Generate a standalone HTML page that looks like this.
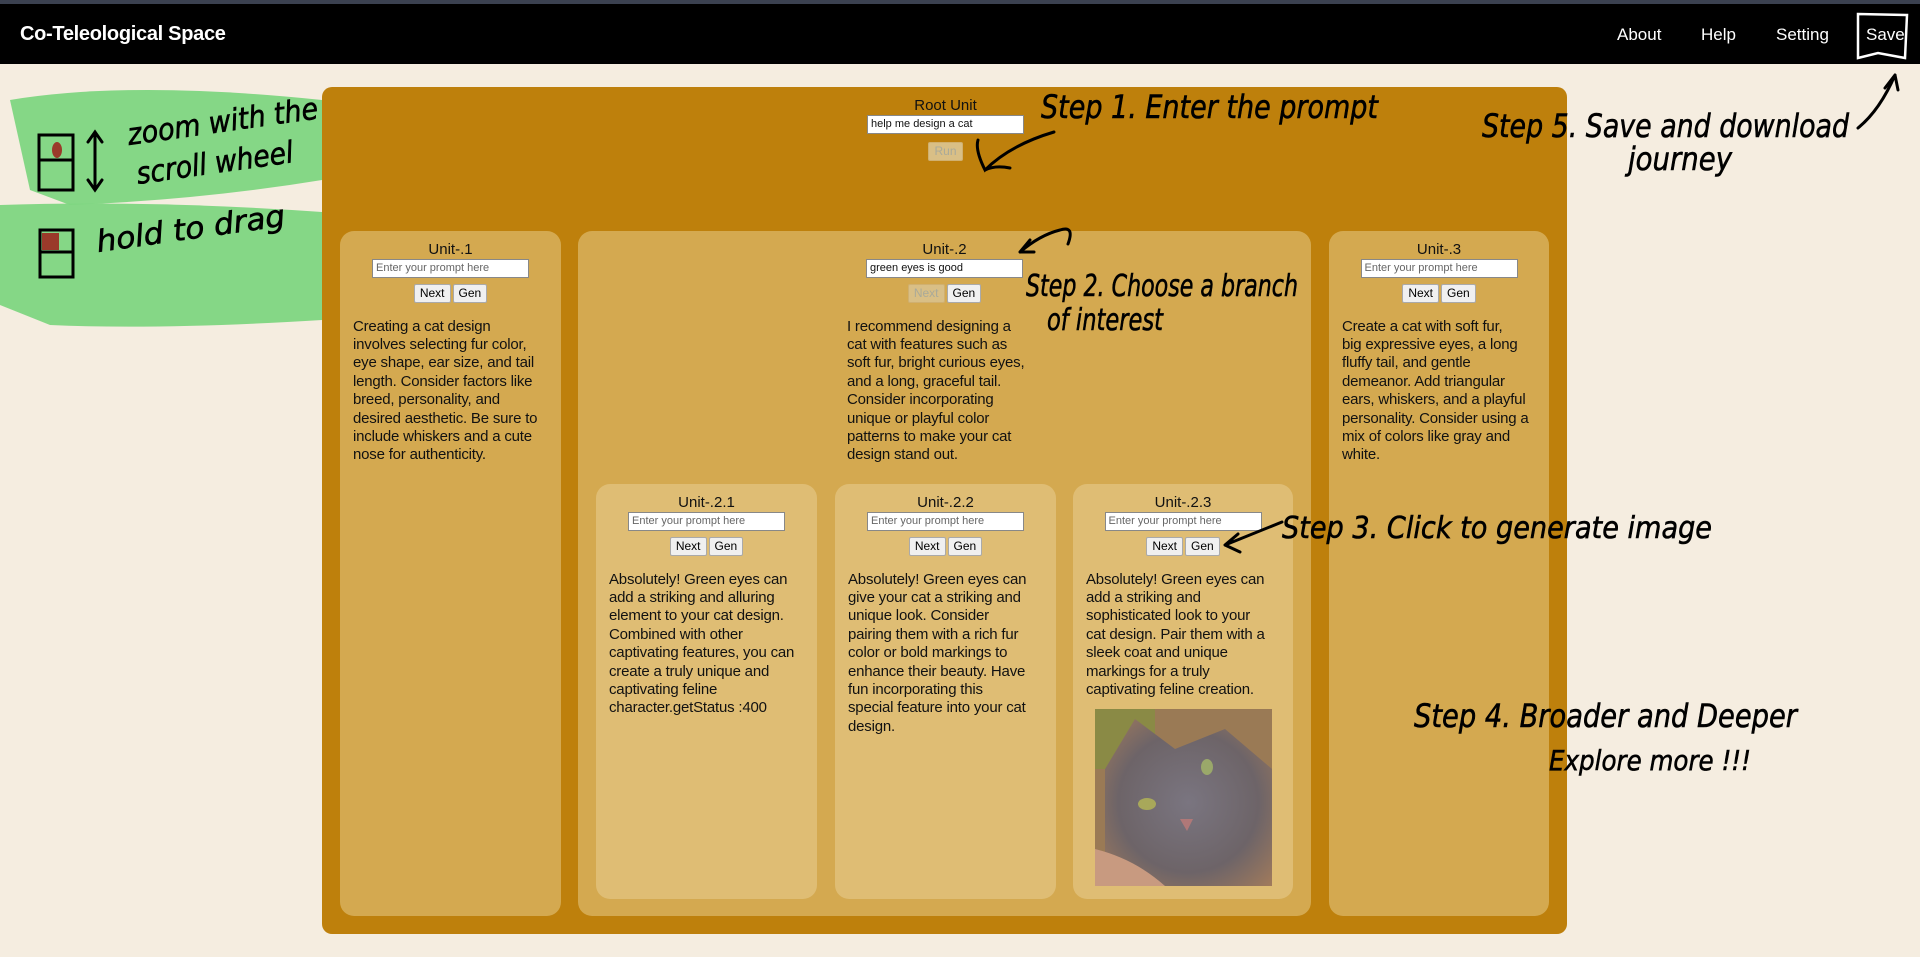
<!DOCTYPE html>
<html><head><meta charset="utf-8"><style>
*{box-sizing:border-box}
body{margin:0;width:1920px;height:957px;background:#f5ede0;font-family:"Liberation Sans",sans-serif;position:relative;overflow:hidden;color:#111}
.top{position:absolute;left:0;top:0;width:1920px;height:4px;background:#3b4150}
.nav{position:absolute;left:0;top:4px;width:1920px;height:60px;background:#000;color:#fff}
.title{position:absolute;left:20px;top:19px;font-size:20px;font-weight:bold;letter-spacing:-0.3px}
.nl{position:absolute;top:21px;font-size:17px}
.outer{position:absolute;left:322px;top:87px;width:1245px;height:847px;background:#be800c;border-radius:10px}
.card{position:absolute;border-radius:14px;text-align:center}
.c1{background:#d4a950}
.c2{background:#dfbd74}
.lbl{font-size:15px;height:17px;line-height:17px;margin-top:10px}
input{width:157px;height:19px;font-size:11px;padding:1px 3px;border:1px solid #888;font-family:"Liberation Sans",sans-serif;background:#fff;color:#111}
input::placeholder{color:#666}
.btns{margin-top:6px;height:20px}
button{font-size:12px;padding:1px 5px;height:19px;border:1px solid #aaa;background:#f0f0f0;border-radius:2px;font-family:"Liberation Sans",sans-serif;margin:0 1px}
button.dis{color:#aa9; background:#d9bf86;border-color:#d0b070}
.txt{text-align:left;font-size:15px;line-height:18.4px;margin:14px 0 0 13px;white-space:nowrap;letter-spacing:-0.2px}
.hw{font-family:"DejaVu Sans",sans-serif;font-style:italic;fill:#000;stroke:#000;stroke-width:0.6}
</style></head><body>
<div class="top"></div>
<div class="nav">
<div class="title">Co-Teleological Space</div>
<div class="nl" style="left:1617px">About</div>
<div class="nl" style="left:1701px">Help</div>
<div class="nl" style="left:1776px">Setting</div>
<div class="nl" style="left:1866px">Save</div>
</div>
<svg style="position:absolute;left:0;top:0" width="1920" height="957">
<path d="M1858 14 L1907 15 L1905 58 L1878 53 L1858 58 Z" fill="none" stroke="#fff" stroke-width="2.5"/>
<path d="M10 100 Q130 80 322 100 L322 180 Q200 200 70 205 L30 190 Z" fill="#7ed681" opacity="0.95"/>
<path d="M0 205 Q150 200 322 212 L322 320 Q160 330 50 325 L0 305 Z" fill="#7ed681" opacity="0.95"/>
</svg>
<div class="outer">
<div style="position:absolute;left:545px;top:10px;width:157px;text-align:center">
<div style="font-size:15px;line-height:17px">Root Unit</div>
<input value="help me design a cat" style="margin-top:0">
<div style="margin-top:8px"><button class="dis">Run</button></div>
</div>
<div class="card c1" style="left:18px;top:144px;width:221px;height:685px">
<div class="lbl">Unit-.1</div><input placeholder="Enter your prompt here">
<div class="btns"><button>Next</button><button>Gen</button></div>
<div class="txt">Creating a cat design<br>involves selecting fur color,<br>eye shape, ear size, and tail<br>length. Consider factors like<br>breed, personality, and<br>desired aesthetic. Be sure to<br>include whiskers and a cute<br>nose for authenticity.</div>
</div>
<div class="card c1" style="left:256px;top:144px;width:733px;height:685px">
<div class="lbl">Unit-.2</div><input value="green eyes is good">
<div class="btns"><button class="dis">Next</button><button>Gen</button></div>
<div class="txt" style="margin-left:269px">I recommend designing a<br>cat with features such as<br>soft fur, bright curious eyes,<br>and a long, graceful tail.<br>Consider incorporating<br>unique or playful color<br>patterns to make your cat<br>design stand out.</div>
<div class="card c2" style="left:18px;top:253px;width:221px;height:415px">
<div class="lbl">Unit-.2.1</div><input placeholder="Enter your prompt here">
<div class="btns"><button>Next</button><button>Gen</button></div>
<div class="txt">Absolutely! Green eyes can<br>add a striking and alluring<br>element to your cat design.<br>Combined with other<br>captivating features, you can<br>create a truly unique and<br>captivating feline<br>character.getStatus :400</div>
</div>
<div class="card c2" style="left:257px;top:253px;width:221px;height:415px">
<div class="lbl">Unit-.2.2</div><input placeholder="Enter your prompt here">
<div class="btns"><button>Next</button><button>Gen</button></div>
<div class="txt">Absolutely! Green eyes can<br>give your cat a striking and<br>unique look. Consider<br>pairing them with a rich fur<br>color or bold markings to<br>enhance their beauty. Have<br>fun incorporating this<br>special feature into your cat<br>design.</div>
</div>
<div class="card c2" style="left:495px;top:253px;width:220px;height:415px">
<div class="lbl">Unit-.2.3</div><input placeholder="Enter your prompt here">
<div class="btns"><button>Next</button><button>Gen</button></div>
<div class="txt">Absolutely! Green eyes can<br>add a striking and<br>sophisticated look to your<br>cat design. Pair them with a<br>sleek coat and unique<br>markings for a truly<br>captivating feline creation.</div>
<svg style="position:absolute;left:22px;top:225px" width="177" height="177">
<defs><radialGradient id="g" cx="0.5" cy="0.5" r="0.7"><stop offset="0" stop-color="#7a7580"/><stop offset="0.6" stop-color="#6d6468"/><stop offset="1" stop-color="#a07a5c"/></radialGradient></defs>
<rect width="177" height="177" fill="#9a7a55"/>
<rect x="0" y="0" width="60" height="60" fill="#8a8a45"/>
<path d="M10 177 L10 60 L40 10 L80 40 L130 20 L177 60 L177 177 Z" fill="url(#g)"/>
<path d="M0 140 Q40 150 70 177 L0 177Z" fill="#c89a80"/>
<ellipse cx="112" cy="58" rx="6" ry="8" fill="#9aa86a"/>
<ellipse cx="52" cy="95" rx="9" ry="6" fill="#a8a85a"/>
<path d="M85 110 L98 110 L92 122Z" fill="#b07878"/>
</svg>
</div>
</div>
<div class="card c1" style="left:1007px;top:144px;width:220px;height:685px">
<div class="lbl">Unit-.3</div><input placeholder="Enter your prompt here">
<div class="btns"><button>Next</button><button>Gen</button></div>
<div class="txt">Create a cat with soft fur,<br>big expressive eyes, a long<br>fluffy tail, and gentle<br>demeanor. Add triangular<br>ears, whiskers, and a playful<br>personality. Consider using a<br>mix of colors like gray and<br>white.</div>
</div>
</div>
<svg style="position:absolute;left:0;top:0" width="1920" height="957">
<g class="hw">
<text x="1041" y="118" font-size="32" textLength="337" lengthAdjust="spacingAndGlyphs">Step 1. Enter the prompt</text>
<text x="1482" y="137" font-size="32" textLength="367" lengthAdjust="spacingAndGlyphs">Step 5. Save and download</text>
<text x="1628" y="170" font-size="32" textLength="104" lengthAdjust="spacingAndGlyphs">journey</text>
<text x="1026" y="296" font-size="30" textLength="272" lengthAdjust="spacingAndGlyphs">Step 2. Choose a branch</text>
<text x="1047" y="330" font-size="30" textLength="116" lengthAdjust="spacingAndGlyphs">of interest</text>
<text x="1282" y="538" font-size="30" textLength="430" lengthAdjust="spacingAndGlyphs">Step 3. Click to generate image</text>
<text x="1414" y="727" font-size="32" textLength="383" lengthAdjust="spacingAndGlyphs">Step 4. Broader and Deeper</text>
<text x="1549" y="770" font-size="28" textLength="202" lengthAdjust="spacingAndGlyphs">Explore more !!!</text>
<text x="129" y="145" font-size="30" textLength="192" lengthAdjust="spacingAndGlyphs" transform="rotate(-8 129 145)">zoom with the</text>
<text x="138" y="184" font-size="30" textLength="158" lengthAdjust="spacingAndGlyphs" transform="rotate(-8 138 184)">scroll wheel</text>
<text x="98" y="252" font-size="30" textLength="190" lengthAdjust="spacingAndGlyphs" transform="rotate(-8 98 252)">hold to drag</text>
</g>
<g fill="none" stroke="#000" stroke-width="3" stroke-linecap="round">
<path d="M1054 132 Q1010 145 985 170 Q975 150 978 140 M985 170 Q995 165 1010 168"/>
<path d="M1068 244 Q1075 225 1060 230 Q1040 235 1020 252 M1020 252 L1030 240 M1020 252 L1034 252"/>
<path d="M1282 522 L1225 545 M1225 545 L1238 534 M1225 545 L1240 552"/>
<path d="M1858 128 Q1880 110 1895 75 M1895 75 L1885 88 M1895 75 L1898 90"/>
<rect x="39" y="135" width="34" height="55"/><path d="M39 160 L73 160"/>
<path d="M95 132 L95 190 M88 142 L95 132 L102 142 M88 180 L95 190 L102 180"/>
<rect x="40" y="230" width="33" height="47"/><path d="M40 252 L73 252"/>
</g>
<ellipse cx="57" cy="150" rx="5" ry="8" fill="#9a3a2a"/>
<rect x="42" y="233" width="17" height="17" fill="#9a3a2a"/>
</svg>
</body></html>
